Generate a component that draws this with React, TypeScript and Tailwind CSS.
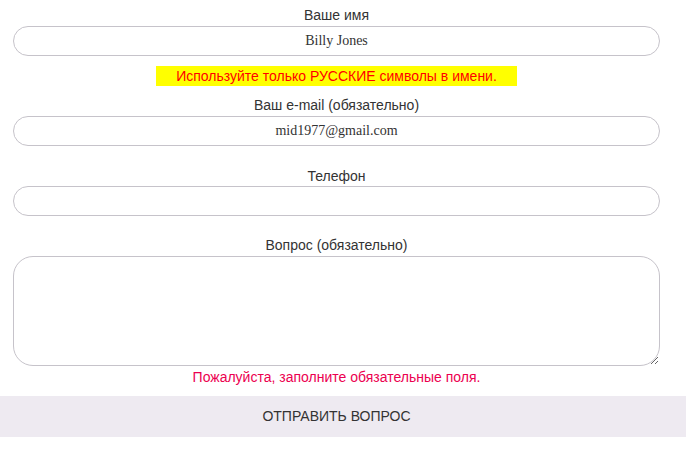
import React from 'react';

const labelCls = 'h-5 text-center text-[14px] leading-5 text-[#333]';
const inputCls =
  'mx-[13px] block h-[30px] w-[647px] rounded-full border border-[#c6c3ca] bg-white text-center text-[14px] text-[#333] outline-none';

export default function App() {
  return (
    <div className="w-[689px] bg-white pt-[5px]" style={{ fontFamily: '"Liberation Sans", Arial, sans-serif' }}>
      <form className="flex w-[673px] flex-col">
        <label className={labelCls}>Ваше имя</label>
        <input
          className={`${inputCls} mt-[1px]`}
          style={{ fontFamily: '"Liberation Serif", "Times New Roman", serif' }}
          defaultValue="Billy Jones"
        />
        <div className="mt-[10px] flex h-5 justify-center">
          <span className="bg-[#ffff00] px-5 text-[14px] leading-5 text-[#ff0000]">
            Используйте только РУССКИЕ символы в имени.
          </span>
        </div>

        <label className={`${labelCls} mt-[9px]`}>Ваш e-mail (обязательно)</label>
        <input
          className={`${inputCls} mt-[1px]`}
          style={{ fontFamily: '"Liberation Serif", "Times New Roman", serif' }}
          defaultValue="mid1977@gmail.com"
        />

        <label className={`${labelCls} mt-[20px]`}>Телефон</label>
        <input className={inputCls} />

        <label className={`${labelCls} mt-[19px]`}>Вопрос (обязательно)</label>
        <textarea className="mx-[13px] mt-[1px] block h-[110px] w-[647px] rounded-[20px] border border-[#c6c3ca] bg-white outline-none" />

        <div className="mt-[1px] h-5 text-center text-[14px] leading-5 text-[#ec0050]">
          Пожалуйста, заполните обязательные поля.
        </div>

        <button
          type="button"
          className="mt-[9px] h-[41px] w-[686px] bg-[#eeeaf1] pr-[13px] text-center text-[14px] text-[#333]"
        >
          ОТПРАВИТЬ ВОПРОС
        </button>
      </form>
    </div>
  );
}
